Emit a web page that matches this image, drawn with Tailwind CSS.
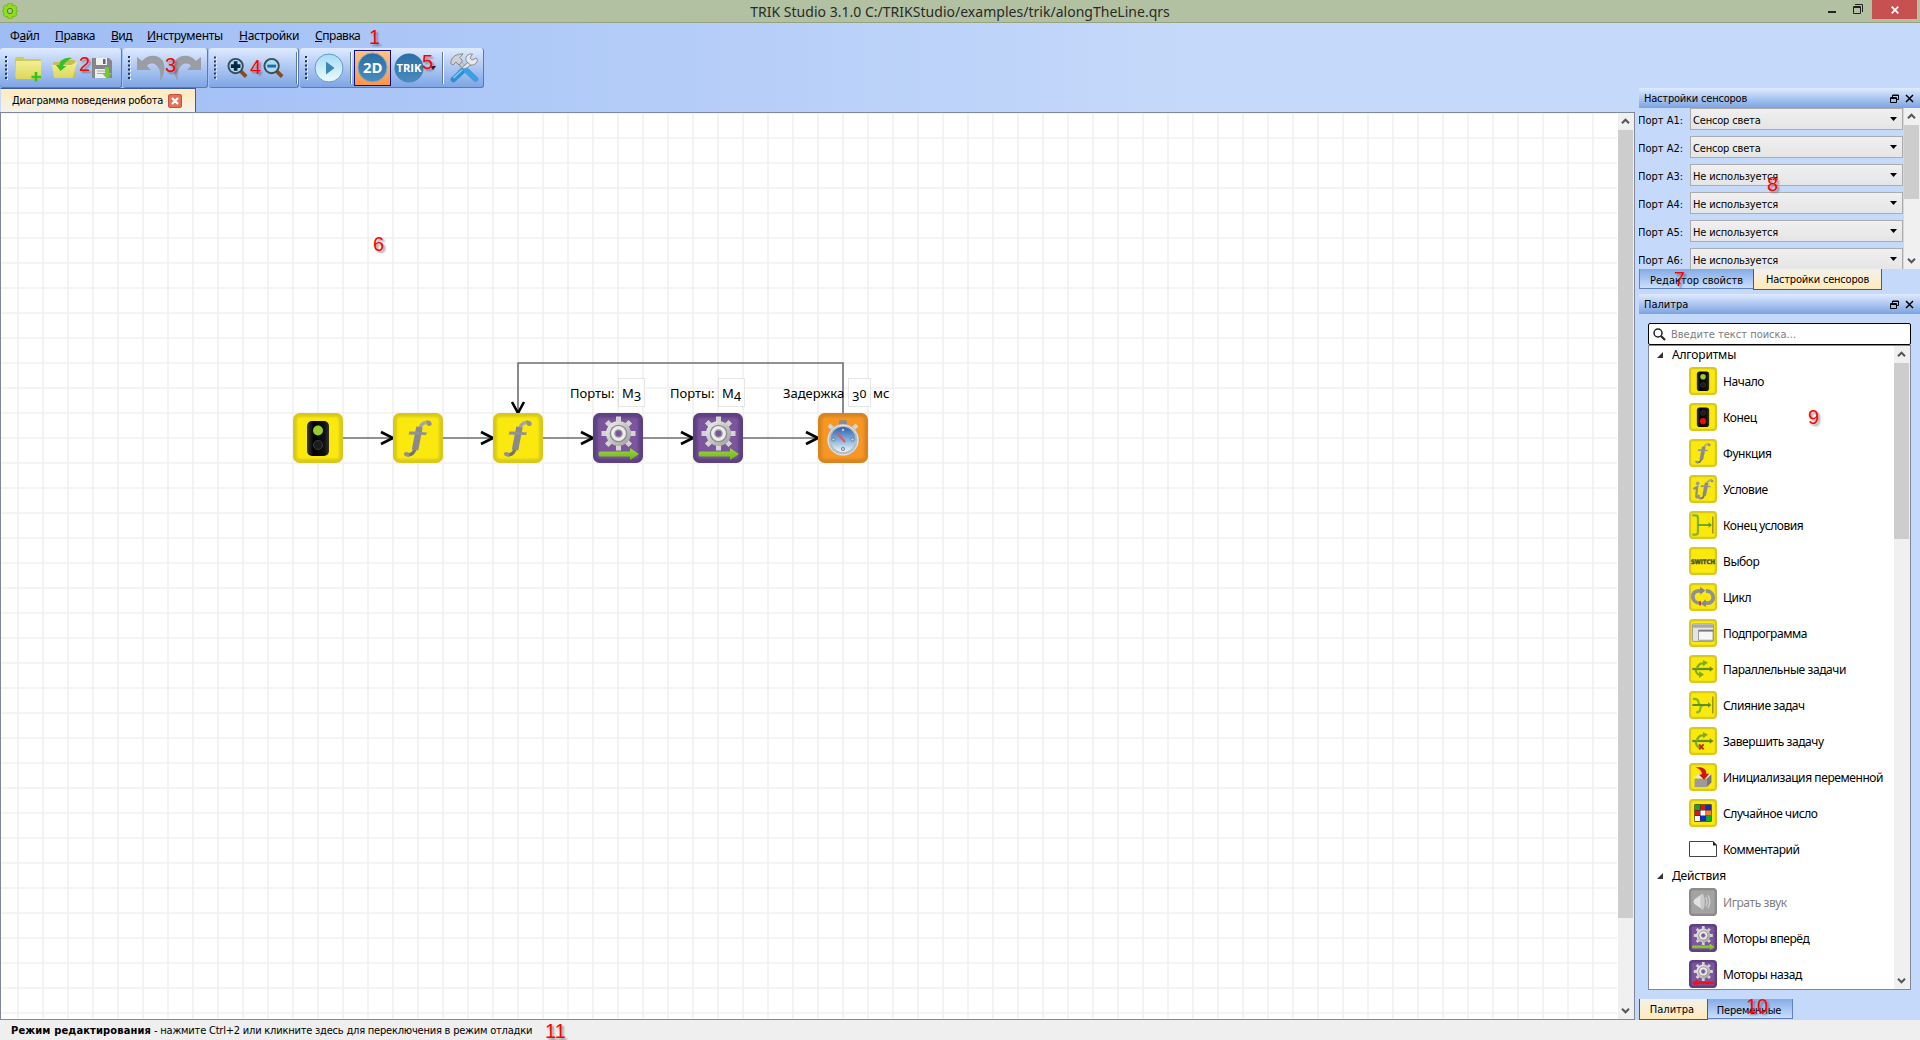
<!DOCTYPE html>
<html lang="ru">
<head>
<meta charset="utf-8">
<title>TRIK Studio</title>
<script src="https://cdn.jsdelivr.net/npm/@tailwindcss/browser@4"></script>
</head>
<body class="relative flex h-[1040px] w-[1920px] flex-col overflow-hidden bg-[#c5d9fa] font-['DejaVu_Sans_Condensed',sans-serif] text-[11px] leading-4 text-black">

<!-- shared icon symbols -->
<svg class="absolute size-0" aria-hidden="true">
  <defs>
    <linearGradient id="gm" x1="0" y1="0" x2="0" y2="1"><stop offset="0" stop-color="#a8a8a8"/><stop offset="1" stop-color="#6f6f74"/></linearGradient>
    <linearGradient id="gg" x1="0" y1="0" x2="1" y2="1"><stop offset="0" stop-color="#f2f2f2"/><stop offset="1" stop-color="#9a9a9a"/></linearGradient>
    <linearGradient id="gr" x1="0" y1="0" x2="0" y2="1"><stop offset="0" stop-color="#9bd93a"/><stop offset="1" stop-color="#6fb51c"/></linearGradient>
    <linearGradient id="gk" x1="0" y1="0" x2="1" y2="0"><stop offset="0" stop-color="#3a3a3a"/><stop offset=".3" stop-color="#000"/><stop offset=".8" stop-color="#111"/><stop offset="1" stop-color="#333"/></linearGradient>
    <linearGradient id="gb" x1="0" y1="0" x2="0" y2="1"><stop offset="0" stop-color="#2f5fae"/><stop offset=".5" stop-color="#7fb0da"/><stop offset="1" stop-color="#f2f8fc"/></linearGradient>
    <linearGradient id="gc" x1="0" y1="0" x2="0" y2="1"><stop offset="0" stop-color="#2a6ea6"/><stop offset="1" stop-color="#4a8cbc"/></linearGradient>
    <linearGradient id="gp" x1="0" y1="0" x2="0" y2="1"><stop offset="0" stop-color="#a6dcf5"/><stop offset="1" stop-color="#eefaff"/></linearGradient>
    <linearGradient id="gf" x1="0" y1="0" x2="0" y2="1"><stop offset="0" stop-color="#f3ef92"/><stop offset="1" stop-color="#dcd75a"/></linearGradient>
    <filter id="soft"><feGaussianBlur stdDeviation="1.1"/></filter>
    <symbol id="yel" viewBox="0 0 50 50"><rect width="50" height="50" rx="6.500" fill="#d9c91a"/><rect x="4" y="4" width="42" height="42" rx="3" fill="#fbe90c" filter="url(#soft)"/></symbol>
    <symbol id="pur" viewBox="0 0 50 50"><rect width="50" height="50" rx="6.500" fill="#5d4180"/><rect x="4.500" y="4.500" width="41" height="41" rx="3" fill="#7b559c" filter="url(#soft)"/></symbol>
    <symbol id="lamp" viewBox="0 0 50 50"><rect x="14" y="8" width="22" height="35" rx="5" fill="url(#gk)"/></symbol>
    <symbol id="start" viewBox="0 0 50 50"><use href="#yel"/><use href="#lamp"/><circle cx="25" cy="17.500" r="5" fill="#96cc2c"/><circle cx="25" cy="32" r="4.500" fill="#1c1c1c" stroke="#3c3c3c"/></symbol>
    <symbol id="end" viewBox="0 0 50 50"><use href="#yel"/><use href="#lamp"/><circle cx="25" cy="17.500" r="4.500" fill="#1c1c1c" stroke="#3c3c3c"/><circle cx="25" cy="32.500" r="5.500" fill="#f40808"/></symbol>
    <symbol id="fpath" viewBox="0 0 50 50">
      <path d="M33.500 9.500C28 9 26.500 15 25.500 20L22.500 34C21.500 39 19.500 42.500 14.500 41.500" fill="none" stroke="url(#gm)" stroke-width="3.400"/>
      <path d="M26.500 14L22 37" fill="none" stroke="#8a8a8c" stroke-width="6.500"/>
      <path d="M33 7.500C37 7 39.500 9 38.500 12C37 14 33.500 13 33.500 10.500ZM16 43.500C12 44 10 42 11.500 39.500C13 38 17 39.500 16.500 42Z" fill="#929294"/>
      <path d="M16.500 18.500L20 18.500L34 19.500L33 22L15.500 21.500Z" fill="#929294"/>
    </symbol>
    <symbol id="func" viewBox="0 0 50 50"><use href="#yel"/><use href="#fpath"/></symbol>
    <symbol id="cond" viewBox="0 0 50 50"><use href="#yel"/><use href="#fpath" x="5"/>
      <path d="M8 25L14.500 21.500L13 38C13 41 16 40 19 36" fill="none" stroke="#8e8e92" stroke-width="4"/><circle cx="15.500" cy="15" r="3.200" fill="#98989a"/></symbol>
    <symbol id="endif" viewBox="0 0 50 50"><use href="#yel"/><path d="M6 8H12Q16 8 16 13V37Q16 42 12 42H6" fill="none" stroke="#82b52c" stroke-width="4"/><path d="M16 25H38" stroke="#5c9a2c" stroke-width="3"/><path d="M35 20L41 25L35 30Z" fill="#5c9a2c"/><path d="M42.500 10V40" stroke="#9a8f14" stroke-width="2.500"/></symbol>
    <symbol id="switch" viewBox="0 0 50 50"><use href="#yel"/><text x="3.500" y="30" textLength="43" lengthAdjust="spacingAndGlyphs" font-family="DejaVu Sans" font-weight="bold" font-size="11" fill="#4b4a3a" stroke="#4b4a3a" stroke-width=".8">SWITCH</text></symbol>
    <symbol id="loop" viewBox="0 0 50 50"><use href="#yel"/><path d="M20 36C3 36 3 14 17 14H22M30 14C47 14 47 36 33 36H28" fill="none" stroke="#8f8f94" stroke-width="6.500"/><path d="M20 6.500L29 13.500L20 21ZM30 29L21 36.500L30 43.500Z" fill="#85858a"/><path d="M20 32V40" stroke="#e01818" stroke-width="2.500"/></symbol>
    <symbol id="sub" viewBox="0 0 50 50"><use href="#yel"/><rect x="6" y="9" width="38" height="31" rx="2" fill="#e4e4e4" stroke="#8d8d8d" stroke-width="1.500"/><path d="M7 13H43" stroke="#a9a9a9" stroke-width="5"/><path d="M17 20H43V38H17Z" fill="#f7f7f7" stroke="#8d8d8d" stroke-width="1.500"/><path d="M17 21H43" stroke="#777" stroke-width="3"/></symbol>
    <symbol id="fork" viewBox="0 0 50 50"><use href="#yel"/><path d="M6 25H38" stroke="#618f22" stroke-width="4"/><path d="M37 20L44 25L37 30Z" fill="#618f22"/><path d="M14 25C16 15 21 14 27 15" fill="none" stroke="#7cab25" stroke-width="4"/><path d="M25 9L34 14L25 20Z" fill="#7cab25"/></symbol>
    <symbol id="par" viewBox="0 0 50 50"><use href="#fork"/><path d="M12 26C13 34 16 35 20 35" fill="none" stroke="#7cab25" stroke-width="4"/><path d="M18 29L27 35L18 41Z" fill="#7cab25"/></symbol>
    <symbol id="join" viewBox="0 0 50 50"><use href="#yel"/><path d="M7 14Q16 13 17 20T26 25M13 38Q20 38 20 32T28 25" fill="none" stroke="#82b52c" stroke-width="4"/><path d="M6 25H36" stroke="#618f22" stroke-width="3.500"/><path d="M34 20L40 25L34 30Z" fill="#618f22"/><path d="M42.500 10V40" stroke="#9a8f14" stroke-width="2.500"/></symbol>
    <symbol id="kill" viewBox="0 0 50 50"><use href="#fork"/><path d="M12 26C13 34 16 36 20 36" fill="none" stroke="#7cab25" stroke-width="4"/><path d="M18 31L26 40M26 31L18 40" stroke="#b8321a" stroke-width="3.500"/></symbol>
    <symbol id="init" viewBox="0 0 50 50"><use href="#yel"/><path d="M8 27L17 20H41L36 28Z" fill="#e6e6e6"/><path d="M10 28H32V43H10Z" fill="#9b9b9b"/><path d="M32 28L40 20V35L32 43Z" fill="#777"/><path d="M12 8C24 6 31 10 31 19L36 19L27 30L18 21L23 20C23 14 19 10 12 8Z" fill="#d61212"/></symbol>
    <symbol id="rand" viewBox="0 0 50 50"><use href="#yel"/><rect x="9.500" y="9.500" width="31" height="31" rx="1" fill="#2c2c2c"/><path d="M10.500 10.500h9v9h-9zM30.500 30.500h9v9h-9z" fill="#10a838"/><path d="M20.500 10.500h9v9h-9zM10.500 20.500h9v9h-9z" fill="#e01212"/><path d="M30.500 10.500h9v9h-9zM20.500 30.500h9v9h-9z" fill="#1428d0"/><path d="M20.500 20.500h9v9h-9zM10.500 30.500h9v9h-9z" fill="#fff"/><path d="M30.500 20.500h9v9h-9z" fill="#f58422"/></symbol>
    <symbol id="comment" viewBox="0 0 28 28"><path d="M.5 6.500H24L27.500 10V21.500H.5Z" fill="#fff" stroke="#444"/><path d="M24 6V10.500H28Z" fill="#222"/></symbol>
    <symbol id="gear" viewBox="0 0 50 50"><g transform="translate(25.500 20.500)"><path d="M0-17V17M-17 0H17M-11.800-11.800L11.800 11.800M-11.800 11.800L11.800-11.800" stroke="#d4d4d4" stroke-width="5"/><circle r="12.500" fill="url(#gg)"/><circle r="8.800" fill="#8d8d90"/><circle r="7.400" fill="#ededed"/><circle r="3.600" fill="#7b559c" stroke="#999" stroke-width="1.400"/></g></symbol>
    <symbol id="fwd" viewBox="0 0 50 50"><use href="#pur"/><use href="#gear"/><path d="M7 38.500H37V35L46 41L37 47V43.500H7Q5.500 43.500 5.500 41T7 38.500Z" fill="url(#gr)"/></symbol>
    <symbol id="back" viewBox="0 0 50 50"><use href="#pur"/><use href="#gear"/><path d="M45 38.500H15V35L5 41L15 47V43.500H45Z" fill="#f0101a"/></symbol>
    <symbol id="sound" viewBox="0 0 50 50"><rect width="50" height="50" rx="6.500" fill="#8b8b8b"/><rect x="4" y="4" width="42" height="42" rx="3" fill="#a3a3a3" filter="url(#soft)"/><path d="M8 25Q9 20 13 18L25 10V39L13 31Q9 29 8 25Z" fill="#e2e2e2"/><ellipse cx="24" cy="24.500" rx="4" ry="14" fill="#cacaca"/><path d="M30 16Q34 24 30 33M34 13Q40 24 34 36" fill="none" stroke="#cfcfcf" stroke-width="2.500"/></symbol>
    <symbol id="timer" viewBox="0 0 50 50"><rect width="50" height="50" rx="6.500" fill="#d98422"/><rect x="4" y="4" width="42" height="42" rx="3" fill="#f79722" filter="url(#soft)"/><rect x="21" y="7" width="8" height="6" rx="1.500" fill="#8c8c8c"/><path d="M11 12L16 17M39 12L34 17" stroke="#d4d4d4" stroke-width="4"/><circle cx="25" cy="27" r="16" fill="#b9bcc2"/><circle cx="25" cy="27" r="15" fill="none" stroke="#e8e8e8"/><circle cx="25" cy="26.500" r="12.500" fill="url(#gb)"/><g fill="#cdd6df" stroke="#56708c" stroke-width=".8"><circle cx="25" cy="17" r="1.600"/><circle cx="25" cy="36" r="1.600"/><circle cx="15.500" cy="26.500" r="1.600"/><circle cx="34.500" cy="26.500" r="1.600"/></g><path d="M19 20L27 29" stroke="#ef5060" stroke-width="2"/></symbol>
    <symbol id="up" viewBox="0 0 9 9"><path d="M1 6.200L4.500 2.700L8 6.200" fill="none" stroke="#555" stroke-width="2"/></symbol>
    <symbol id="down" viewBox="0 0 9 9"><path d="M1 2.800L4.500 6.300L8 2.800" fill="none" stroke="#555" stroke-width="2"/></symbol>
    <symbol id="float" viewBox="0 0 9 9"><path d="M2.500 3V1H8.500V5.500H6.500M.5 3.500H6.500V8.500H.5ZM2.500 1.500H8.500M.5 4.500H6.500" fill="none" stroke="#000"/></symbol>
    <symbol id="close" viewBox="0 0 9 9"><path d="M1 1L8 8M8 1L1 8" stroke="#000" stroke-width="1.500"/></symbol>
    <symbol id="grip" viewBox="0 0 3 24"><path d="M1 0V24" stroke="#1a2f66" stroke-width="2" stroke-dasharray="2 2.200"/><path d="M2.500 1V24" stroke="#fff" stroke-dasharray="2 2.200"/></symbol>
  </defs>
</svg>

<!-- title bar -->
<header class="relative flex h-[23px] shrink-0 items-center justify-center border-b border-[#94a27f] bg-[#b2c1a1] pt-px font-['Noto_Sans',sans-serif] text-sm tracking-[0.02px] text-[#2a2a2a]">
  <svg class="absolute top-[3px] left-[2px] size-4" viewBox="-8 -8 16 16"><path d="M-1.800-8H1.800L2.300-5.400L4.600-5.600L6.800-4L6-1.400L7.800 0L6 1.400L6.800 4L4.600 5.600L2.300 5.400L1.800 8H-1.800L-2.300 5.400L-4.600 5.600L-6.800 4L-6 1.400L-7.800 0L-6-1.400L-6.800-4L-4.600-5.600L-2.300-5.400Z" fill="#8ee01a" stroke="#62a80e" stroke-width=".7"/><circle r="2.700" fill="#b2c1a1" stroke="#4f8a10"/></svg>
  <span>TRIK Studio 3.1.0 C:/TRIKStudio/examples/trik/alongTheLine.qrs</span>
  <div class="absolute top-0 right-[3px] flex h-[19px] items-center">
    <svg class="mr-[17px] h-[19px] w-2" viewBox="0 0 8 19"><path d="M0 12H8" stroke="#222" stroke-width="2"/></svg>
    <svg class="mr-[9px] h-[19px] w-[10px]" viewBox="0 0 10 19"><path d="M2 4.500H9.500V12" fill="none" stroke="#222"/><path d="M.5 6.500H7.500V13.500H.5ZM.5 7.500H7.500" fill="none" stroke="#222"/></svg>
    <div class="flex h-[19px] w-[45px] items-center justify-center bg-[#c75050]"><svg class="size-2" viewBox="0 0 8 8"><path d="M.7.7L7.300 7.300M7.300.7L.7 7.300" stroke="#fff" stroke-width="1.700"/></svg></div>
  </div>
</header>

<div class="flex h-[997px] shrink-0 bg-linear-to-r from-[#9fbdf5] to-[#c5d9fa] to-[1200px]">
  <!-- left side -->
  <div class="flex w-[1635px] flex-col">
    <nav class="flex h-[25px] items-center pl-[10px] font-['Noto_Sans',sans-serif] text-xs whitespace-nowrap">
      <span class="w-[45px] tracking-[-0.4px]">Ф<u>а</u>йл</span>
      <span class="w-14 tracking-[-0.4px]"><u>П</u>равка</span>
      <span class="w-9 tracking-[-0.5px]"><u>В</u>ид</span>
      <span class="w-[92px] tracking-[-0.27px]"><u>И</u>нструменты</span>
      <span class="w-[76px] tracking-[-0.3px]"><u>Н</u>астройки</span>
      <span class="tracking-[-0.45px]"><u>С</u>правка</span>
    </nav>

    <!-- toolbars -->
    <div class="flex h-10 gap-px">
      <div class="flex w-[122px] items-center rounded-[3px] border-r border-b border-[#5a78b4] bg-linear-to-b from-[#dfeaff] to-[#7fa5e4] pl-[5px]">
        <svg class="mr-[6px] h-6 w-[3px]"><use href="#grip"/></svg>
        <svg class="mr-[7px] size-[30px]" viewBox="0 0 30 30"><path d="M1 6Q1 4 3 4H9L11 6H26Q27 6 27 8V25H3Q1 25 1 23Z" fill="#cfca5c"/><path d="M2 8H27V25Q27 26 25 26H3Q1.500 26 1.500 24Z" fill="url(#gf)"/><path d="M22 19V28.500M17.500 24H27" stroke="#34c41c" stroke-width="2.600"/></svg>
        <svg class="mr-[11px] size-[28px]" viewBox="0 0 28 28"><path d="M2 8H8L10 6H24V23H3Z" fill="#c4bf52"/><path d="M1 11H20L26 8L22 23Q22 24 20 24H4Q3 24 3 23Z" fill="url(#gf)"/><path d="M21 4C14 3 9 6 8.500 11L5 11L9.500 17L15.500 12H12C13 9 16 7 21 4Z" fill="#31c227"/></svg>
        <svg class="size-6" viewBox="0 0 24 24"><path d="M2 2H19L22 5V22H2Z" fill="#85858a"/><path d="M6 2H17V9H6Z" fill="#f1f1f1"/><path d="M13 3H15.500V8H13Z" fill="#666"/><path d="M5 13H18V22H5Z" fill="#eee"/><path d="M7 15H16M7 17.500H14" stroke="#aaa"/><path d="M15 11H19V17H22L17 23L12 17H15Z" fill="#76c832"/></svg>
      </div>
      <div class="flex w-[85px] items-center rounded-[3px] border-r border-b border-[#5a78b4] bg-linear-to-b from-[#dfeaff] to-[#7fa5e4] pl-[5px]">
        <svg class="mr-[5px] h-6 w-[3px]"><use href="#grip"/></svg>
        <svg class="h-7 w-[30px]" viewBox="0 0 30 28"><path d="M1 3L6 7C12 0 22 0 27 7C30 14 28 22 24 27C25 19 24 14 20 11C17 9 13 9 11 12L15 16H1Z" fill="#9a9da4"/></svg>
        <svg class="ml-[6px] h-7 w-[30px]" viewBox="0 0 30 28"><path d="M29 3L24 7C18 0 8 0 3 7C0 14 2 22 6 27C5 19 6 14 10 11C13 9 17 9 19 12L15 16H29Z" fill="#9a9da4"/></svg>
      </div>
      <div class="flex w-[90px] items-center rounded-[3px] border-r border-b border-[#5a78b4] bg-linear-to-b from-[#dfeaff] to-[#7fa5e4] pl-[5px]">
        <svg class="mr-[10px] h-6 w-[3px]"><use href="#grip"/></svg>
        <svg class="mr-[15px] size-[22px]" viewBox="0 0 22 22"><path d="M14 14L20 20" stroke="#8c4a1c" stroke-width="4"/><circle cx="9" cy="9" r="7.500" fill="#a5dcf8" stroke="#3d4c58" stroke-width="2"/><path d="M9 4V14M4 9H14" stroke="#0a2540" stroke-width="3.800"/></svg>
        <svg class="size-[22px]" viewBox="0 0 22 22"><path d="M14 14L20 20" stroke="#8c4a1c" stroke-width="4"/><circle cx="9" cy="9" r="7.500" fill="#a5dcf8" stroke="#3d4c58" stroke-width="2"/><path d="M4.500 9H13.500" stroke="#1d6a9c" stroke-width="3"/></svg>
        <div class="ml-[12px] h-8 w-[2px] border-l border-[#5a78b4] bg-white"></div>
      </div>
      <div class="flex w-[184px] items-center rounded-[3px] border-r border-b border-[#5a78b4] bg-linear-to-b from-[#dfeaff] to-[#7fa5e4] pl-[5px]">
        <svg class="mr-[6px] h-6 w-[3px]"><use href="#grip"/></svg>
        <svg class="size-[30px]" viewBox="0 0 30 30"><circle cx="15" cy="15" r="14" fill="url(#gp)" stroke="#5e9cc6"/><path d="M12 8.500L20.500 15L12 21.500Z" fill="#3b86b8"/></svg>
        <div class="mr-[2px] ml-[6px] h-8 w-[2px] border-l border-[#5a78b4] bg-white"></div>
        <div class="flex h-9 w-[37px] items-center justify-center border border-[#10107c] bg-linear-to-b from-[#ffc382] to-[#ff9448]">
          <svg class="size-[31px]" viewBox="0 0 31 31"><circle cx="15.500" cy="15.500" r="14.500" fill="url(#gc)" stroke="#79aed2"/><text x="6" y="20.500" textLength="19.500" lengthAdjust="spacingAndGlyphs" font-family="Open Sans" font-weight="bold" font-size="14" fill="#fff">2D</text></svg>
        </div>
        <svg class="ml-[3px] size-[30px]" viewBox="0 0 30 30"><circle cx="15" cy="15" r="14.500" fill="url(#gc)"/><text x="2.500" y="18.800" textLength="25" lengthAdjust="spacingAndGlyphs" font-family="Open Sans" font-weight="bold" font-size="10.500" fill="#fff">TRIK</text></svg>
        <svg class="ml-[6px] h-2 w-[6px]" viewBox="0 0 6 8"><path d="M0 2H6L3 6Z" fill="#111"/></svg>
        <div class="mr-[6px] ml-[6px] h-8 w-[2px] border-l border-[#5a78b4] bg-white"></div>
        <svg class="h-[30px] w-[29px]" viewBox="0 0 29 30"><path d="M7 7L20 21" stroke="#8f9296" stroke-width="4.500"/><path d="M7.500 7L20 20.500" stroke="#c8cacc" stroke-width="3"/><path d="M22 8L9 20" stroke="#8f9296" stroke-width="4.500"/><path d="M22 8L9 20" stroke="#e2e4e6" stroke-width="3"/><path d="M1 8Q3 1 13 .8L10 4.500L12.500 8L9 12L6 9L3 12L.8 10.500Z" fill="#cfd1d3" stroke="#77797c" stroke-width=".8"/><path d="M26.500 5L22 7L20 5L22.500 1C17 .5 14.500 4.500 16.500 8.500L20.500 12C25 12.500 29 9 26.500 5Z" fill="#e6e8ea" stroke="#77797c" stroke-width=".8"/><path d="M3.500 26.500L12.500 18" stroke="#2e8fd6" stroke-width="5.800" stroke-linecap="round"/><path d="M25.500 26L16.500 17.500" stroke="#3d9fe2" stroke-width="5.800" stroke-linecap="round"/><path d="M4 24.500L12 17" stroke="#8cccf4" stroke-width="1.500" stroke-linecap="round"/></svg>
      </div>
    </div>

    <!-- document tab -->
    <div class="flex h-6 items-end">
      <div class="flex h-6 w-[196px] items-center border-t border-r border-l border-[#3f5a9a] border-l-[#c5d9fa] bg-linear-to-b from-[#ffebba] to-[#f3f2ec] pl-[11px] whitespace-nowrap">
        <span class="w-[156px] pt-px tracking-[-0.25px]">Диаграмма поведения робота</span>
        <div class="flex size-[14px] items-center justify-center rounded-[2px] border border-[#c8503c] bg-[#e07458]"><svg class="size-2" viewBox="0 0 8 8"><path d="M1 1L7 7M7 1L1 7" stroke="#fff" stroke-width="2.200"/></svg></div>
      </div>
    </div>

    <!-- diagram canvas -->
    <div class="flex h-[908px] border border-[#82879a] bg-white">
      <svg class="h-[906px] w-[1617px] shrink-0 font-['Noto_Sans',sans-serif] text-[13px]" viewBox="1 113 1617 906">
        <defs><pattern id="grid" width="25" height="25" patternUnits="userSpaceOnUse"><path d="M18 0V25M0 13H25" stroke="#f1f1f1" stroke-width="1.700"/></pattern></defs>
        <rect x="1" y="113" width="1616" height="906" fill="url(#grid)"/>
        <g fill="none" stroke="#707070" stroke-width="1.600"><path d="M343 438H392M443 438H492M543 438H592M643 438H692M743 438H817M843 413V363H518V412"/></g>
        <g fill="none" stroke="#000" stroke-width="2.600"><path d="M381 432L393 438L381 444M481 432L493 438L481 444M581 432L593 438L581 444M681 432L693 438L681 444M806 432L818 438L806 444M512 402L518 413L524 402"/></g>
        <use href="#start" x="293" y="413" width="50" height="50"/>
        <use href="#func" x="393" y="413" width="50" height="50"/>
        <use href="#func" x="493" y="413" width="50" height="50"/>
        <use href="#fwd" x="593" y="413" width="50" height="50"/>
        <use href="#fwd" x="693" y="413" width="50" height="50"/>
        <use href="#timer" x="818" y="413" width="50" height="50"/>
        <g fill="#fff" fill-opacity=".7" stroke="#ccc" stroke-dasharray="1 1"><rect x="618.500" y="378.500" width="26" height="28"/><rect x="718.500" y="378.500" width="26" height="28"/><rect x="848.500" y="378.500" width="22" height="28"/></g>
        <text x="570" y="398">Порты:</text><text x="622" y="398">M<tspan dy="2.500">3</tspan></text>
        <text x="670" y="398">Порты:</text><text x="722" y="398">M<tspan dy="2.500">4</tspan></text>
        <text x="783" y="398">Задержка</text><text x="852" y="398"><tspan dy="2.500">3</tspan><tspan dy="-2.500" font-size="10" textLength="7" lengthAdjust="spacingAndGlyphs">0</tspan></text><text x="873" y="398">мс</text>
      </svg>
      <div class="flex w-4 flex-col items-center bg-[#f0f0f0] py-1 pr-px">
        <svg class="size-[9px] shrink-0"><use href="#up"/></svg>
        <div class="mt-1 h-[788px] w-[15px] bg-[#cdcdcd]"></div>
        <svg class="mt-auto size-[9px] shrink-0"><use href="#down"/></svg>
      </div>
    </div>
  </div>

  <!-- right docks -->
  <aside class="flex w-[285px] flex-col bg-[#c5d9fa] pt-[65px] pl-1">
    <div class="flex h-5 items-center bg-linear-to-b from-[#e0ebff] to-[#7ba3e2] pr-[6px] pl-[5px]">
      <span class="grow pt-[2px] tracking-[-0.2px]">Настройки сенсоров</span>
      <svg class="mr-[6px] size-[9px]"><use href="#float"/></svg><svg class="size-[9px]"><use href="#close"/></svg>
    </div>
    <div class="flex h-[161px] overflow-hidden">
      <div class="flex w-[265px] shrink-0 flex-col gap-[6px] whitespace-nowrap" id="ports"></div>
      <div class="flex w-4 flex-col items-center bg-[#f0f0f0] py-1 pr-px">
        <svg class="size-[9px] shrink-0"><use href="#up"/></svg>
        <div class="mt-1 h-[74px] w-[15px] bg-[#cdcdcd]"></div>
        <svg class="mt-auto size-[9px] shrink-0"><use href="#down"/></svg>
      </div>
    </div>
    <div class="flex h-[25px] items-start whitespace-nowrap">
      <div class="flex h-5 w-[114px] items-center justify-center border-b border-l border-[#5f82c4] bg-linear-to-b from-[#84abe6] to-[#cbdefc] pt-[5px]">Редактор свойств</div>
      <div class="flex h-[21px] w-[129px] items-center justify-center border-r border-b border-l border-[#3f5a9a] bg-linear-to-b from-[#f3f1ec] to-[#ffebba] pt-[2px] tracking-[-0.2px]">Настройки сенсоров</div>
    </div>
    <div class="flex h-5 items-center bg-linear-to-b from-[#e0ebff] to-[#7ba3e2] pr-[6px] pl-[5px]">
      <span class="grow pt-[2px]">Палитра</span>
      <svg class="mr-[6px] size-[9px]"><use href="#float"/></svg><svg class="size-[9px]"><use href="#close"/></svg>
    </div>
    <div class="mt-[9px] ml-[9px] flex h-[22px] w-[263px] items-center rounded-[2px] border border-black bg-white pl-1 text-[#7c7c7c]">
      <svg class="mr-[5px] size-[13px]" viewBox="0 0 13 13"><circle cx="5" cy="5" r="4" fill="none" stroke="#222" stroke-width="1.500"/><path d="M8 8L12 12" stroke="#222" stroke-width="2.200"/></svg>
      <span class="pt-[2px]">Введите текст поиска...</span>
    </div>
    <div class="ml-[9px] flex h-[645px] w-[263px] overflow-hidden border border-[#82879a] bg-white">
      <div class="flex w-[245px] shrink-0 flex-col font-['Noto_Sans',sans-serif] text-xs whitespace-nowrap" id="palette"></div>
      <div class="flex w-4 flex-col items-center bg-[#f0f0f0] py-1 pr-px">
        <svg class="size-[9px] shrink-0"><use href="#up"/></svg>
        <div class="mt-1 h-[176px] w-[15px] bg-[#cdcdcd]"></div>
        <svg class="mt-auto size-[9px] shrink-0"><use href="#down"/></svg>
      </div>
    </div>
    <div class="mt-[9px] flex h-[21px] items-start">
      <div class="flex h-[21px] w-[69px] items-center justify-center border-r border-b border-l border-[#3f5a9a] bg-linear-to-b from-[#f3f1ec] to-[#ffebba] pt-[2px] pr-[3px]">Палитра</div>
      <div class="flex h-5 w-[85px] items-center justify-center border-r border-b border-[#5f82c4] bg-linear-to-b from-[#84abe6] to-[#cbdefc] pt-1 pr-[2px] tracking-[-0.2px]">Переменные</div>
    </div>
  </aside>
</div>

<!-- status bar -->
<footer class="flex h-5 shrink-0 items-center bg-[#efefef] pl-[11px] whitespace-nowrap"><b class="w-[143px] pt-px tracking-[0.15px]">Режим редактирования</b><span class="pt-px tracking-[-0.21px]">- нажмите Ctrl+2 или кликните здесь для переключения в режим отладки</span></footer>

<!-- numbered callouts over the window -->
<div class="font-['Liberation_Sans',sans-serif] text-[20px] leading-5 text-[#ff0000] [text-shadow:2px_2px_2px_rgba(80,80,80,.55)]">
  <span class="absolute top-[27px] left-[369px]">1</span>
  <span class="absolute top-[54px] left-[79px]">2</span>
  <span class="absolute top-[55px] left-[165px]">3</span>
  <span class="absolute top-[57px] left-[250px]">4</span>
  <span class="absolute top-[52px] left-[422px]">5</span>
  <span class="absolute top-[234px] left-[373px]">6</span>
  <span class="absolute top-[269px] left-[1674px]">7</span>
  <span class="absolute top-[174px] left-[1767px]">8</span>
  <span class="absolute top-[407px] left-[1808px]">9</span>
  <span class="absolute top-[996px] left-[1746px]">10</span>
  <span class="absolute top-[1021px] left-[545px]">11</span>
</div>

<script>
const ports = [['A1', 'Сенсор света'], ['A2', 'Сенсор света'], ['A3', 'Не используется'], ['A4', 'Не используется'], ['A5', 'Не используется'], ['A6', 'Не используется']];
document.getElementById('ports').innerHTML = ports.map(([p, v]) => `
  <div class="flex h-[22px] shrink-0 items-center">
    <span class="-ml-px w-[52px] pt-[3px]">Порт ${p}:</span>
    <div class="flex h-[22px] w-[213px] items-center justify-between border border-[#acacac] bg-linear-to-b from-[#f0f0f0] to-[#e5e5e5] pr-[5px] pl-[2px]"><span class="pt-[3px] tracking-[-0.17px]">${v}</span><svg class="h-1 w-[7px]" viewBox="0 0 7 4"><path d="M0 0H7L3.5 4Z"/></svg></div>
  </div>`).join('');

const head = t => `<div class="flex h-[17px] shrink-0 items-center pl-2"><svg class="mr-[9px] size-[6px]" viewBox="0 0 6 6"><path d="M6 0V6H0Z" fill="#333"/></svg><span class="tracking-[-0.17px]">${t}</span></div>`;
const item = ([icon, t, cls = '']) => `<div class="flex h-9 shrink-0 items-center pl-10"><svg class="mr-[6px] size-7" viewBox="0 0 28 28"><use href="#${icon}" width="28" height="28"/></svg><span class="pt-px tracking-[-0.42px] ${cls}">${t}</span></div>`;
document.getElementById('palette').innerHTML =
  head('Алгоритмы') +
  [['start', 'Начало'], ['end', 'Конец'], ['func', 'Функция'], ['cond', 'Условие'], ['endif', 'Конец условия'], ['switch', 'Выбор'], ['loop', 'Цикл'], ['sub', 'Подпрограмма'], ['par', 'Параллельные задачи'], ['join', 'Слияние задач'], ['kill', 'Завершить задачу'], ['init', 'Инициализация переменной'], ['rand', 'Случайное число'], ['comment', 'Комментарий']].map(item).join('') +
  head('Действия') +
  [['sound', 'Играть звук', 'text-[#808080]'], ['fwd', 'Моторы вперёд'], ['back', 'Моторы назад']].map(item).join('');
</script>
</body>
</html>
